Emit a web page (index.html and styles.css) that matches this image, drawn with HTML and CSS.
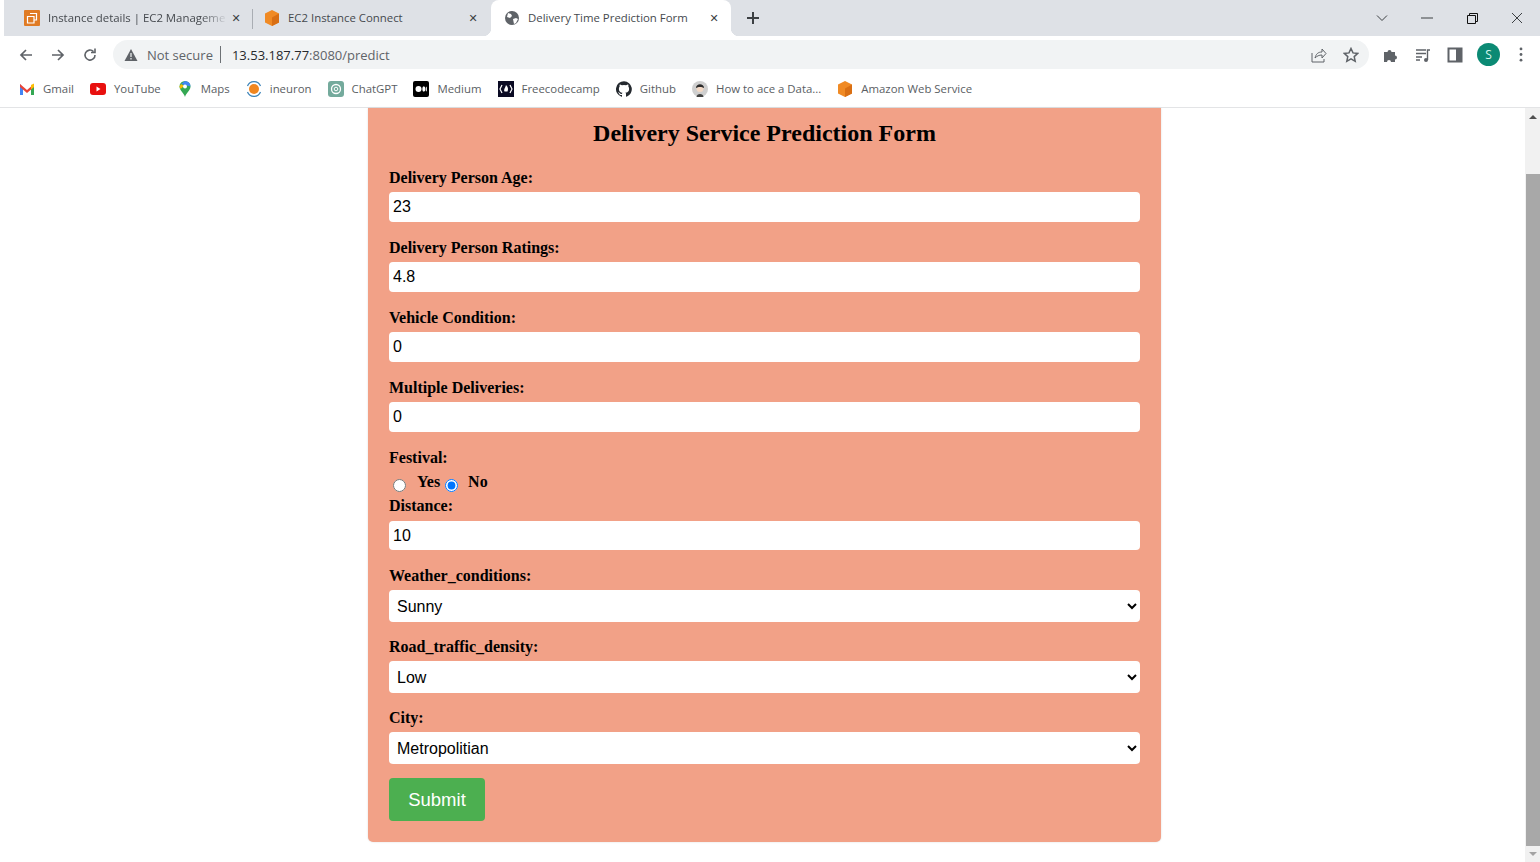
FILE: index.html
```html
<!DOCTYPE html>
<html lang="en">
<head>
  <meta charset="UTF-8">
  <title>Delivery Time Prediction Form</title>
  <link rel="stylesheet" href="styles.css">
</head>
<body>

<div class="tabstrip">
  <div class="tab tab-first">
    <svg class="favicon" viewBox="0 0 16 16"><rect width="16" height="16" rx="1" fill="#e07b24"/><path d="M6 3.500h6.500V10H10M3.500 6.500H10V13H3.500z" fill="none" stroke="#fff" stroke-width="1.200"/></svg>
    <span class="tab-title tab-title-fade">Instance details | EC2 Manageme</span>
    <span class="tab-close">&#10005;</span>
  </div>
  <div class="tab tab-second">
    <svg class="favicon" viewBox="0 0 16 16"><path d="M8 0l7 3.500v9L8 16l-7-3.500v-9z" fill="#f08a24"/><path d="M8 7.500L15 3.500v9L8 16z" fill="#d96f14"/></svg>
    <span class="tab-title">EC2 Instance Connect</span>
    <span class="tab-close">&#10005;</span>
  </div>
  <div class="tab tab-active">
    <svg class="favicon" viewBox="0 0 16 16"><circle cx="8" cy="8" r="7" fill="#5f6368"/><path d="M4 3l3 1 1 2-2 2-3-1zM9 9l3-1 2 1-2 4-2 1z" fill="#fff"/></svg>
    <span class="tab-title">Delivery Time Prediction Form</span>
    <span class="tab-close">&#10005;</span>
  </div>
  <svg class="new-tab" viewBox="0 0 14 14"><path d="M7 1v12M1 7h12" stroke="#3c4043" stroke-width="2"/></svg>
  <div class="window-controls">
    <svg viewBox="0 0 12 12"><path d="M1 3.500l5 5 5-5" fill="none" stroke="#3c4043"/></svg>
    <svg viewBox="0 0 12 12"><path d="M0 6h12" stroke="#3c4043"/></svg>
    <svg viewBox="0 0 12 12"><path d="M1.500 3.500h8v8h-8zM3.500 3.500v-2h8v8h-2" fill="none" stroke="#111"/></svg>
    <svg viewBox="0 0 12 12"><path d="M1 1l10 10M11 1L1 11" stroke="#3c4043"/></svg>
  </div>
</div>

<div class="toolbar">
  <svg class="nav-icon" viewBox="0 0 16 16"><path d="M14 8H3M8 3L3 8l5 5" fill="none" stroke="#5f6368" stroke-width="1.700"/></svg>
  <svg class="nav-icon" viewBox="0 0 16 16"><path d="M2 8h11M8 3l5 5-5 5" fill="none" stroke="#5f6368" stroke-width="1.700"/></svg>
  <svg class="nav-icon" viewBox="0 0 16 16"><path d="M13 8a5 5 0 1 1-1.500-3.500M13 1.500V5.500H9" fill="none" stroke="#5f6368" stroke-width="1.600"/></svg>
  <div class="omnibox">
    <svg class="warn" viewBox="0 0 14 14"><path d="M7 1l6.500 12H.5z" fill="#5f6368"/><path d="M7 5v4M7 10v1.500" stroke="#f1f3f4" stroke-width="1.200"/></svg>
    <span class="not-secure">Not secure</span>
    <span class="omni-sep"></span>
    <span class="url"><span class="url-host">13.53.187.77</span>:8080/predict</span>
    <svg class="omni-share" viewBox="0 0 16 16"><path d="M1 6v9h12v-3M4 11c1-4 3-6 7-6V2l4 4.500L11 11V8c-3 0-5 1-7 3z" fill="none" stroke="#5f6368"/></svg>
    <svg class="omni-star" viewBox="0 0 16 16"><path d="M8 1.500l2 4.400 4.800.5-3.600 3.200 1 4.700L8 11.900l-4.200 2.400 1-4.700L1.200 6.400 6 5.900z" fill="none" stroke="#5f6368" stroke-width="1.500"/></svg>
  </div>
  <div class="toolbar-right">
    <svg class="tool-icon" viewBox="0 0 16 16"><path d="M1 5h3.500a2 2 0 1 1 4 0H12v3.500a2 2 0 1 1 0 4V15H8a2 2 0 1 0-4 0H1z" fill="#5f6368"/></svg>
    <svg class="tool-icon" viewBox="0 0 16 16"><path d="M1 3h10M1 6.500h10M1 10h6M1 13h4" stroke="#5f6368" stroke-width="1.400"/><circle cx="11" cy="13" r="2" fill="#5f6368"/><path d="M12.500 13V3H15" fill="none" stroke="#5f6368" stroke-width="1.400"/></svg>
    <svg class="tool-icon" viewBox="0 0 16 16"><rect x="1.500" y="1.500" width="13" height="13" fill="none" stroke="#5f6368" stroke-width="2"/><rect x="9" y="2" width="5" height="12" fill="#5f6368"/></svg>
    <span class="avatar">S</span>
    <svg class="menu-dots" viewBox="0 0 4 16"><circle cx="2" cy="2" r="1.500" fill="#5f6368"/><circle cx="2" cy="8" r="1.500" fill="#5f6368"/><circle cx="2" cy="14" r="1.500" fill="#5f6368"/></svg>
  </div>
</div>

<div class="bookmarks">
  <div class="bookmark">
    <svg class="favicon" viewBox="0 0 16 16"><path d="M1 3v11h3V7z" fill="#4285f4"/><path d="M15 3v11h-3V7z" fill="#34a853"/><path d="M1 3l7 6 7-6v3l-7 6-7-6z" fill="#ea4335"/><path d="M12 4l3-1.500V6l-3 2.500z" fill="#fbbc04"/></svg>
    <span>Gmail</span>
  </div>
  <div class="bookmark">
    <svg class="favicon" viewBox="0 0 16 16"><rect y="2" width="16" height="12" rx="3" fill="#e8100f"/><path d="M6.500 5.500v5l4-2.500z" fill="#fff"/></svg>
    <span>YouTube</span>
  </div>
  <div class="bookmark">
    <svg class="favicon" viewBox="0 0 16 16"><path d="M8 0a5.500 5.500 0 0 1 5.500 5.500C13.500 9.500 9 12 8 16 7 12 2.500 9.500 2.500 5.500A5.500 5.500 0 0 1 8 0z" fill="#34a853"/><path d="M8 0a5.500 5.500 0 0 1 5.500 5.500L4 3z" fill="#4285f4"/><path d="M2.500 5.500L4 3l3 2-3.500 3z" fill="#fbbc04"/><circle cx="8" cy="5.500" r="2" fill="#fff"/></svg>
    <span>Maps</span>
  </div>
  <div class="bookmark">
    <svg class="favicon" viewBox="0 0 16 16"><circle cx="8" cy="8" r="5" fill="#f0861f"/><path d="M1.500 5a7 7 0 0 1 13 0M1.500 11a7 7 0 0 0 13 0" fill="none" stroke="#3b83b8" stroke-width="1.200"/></svg>
    <span>ineuron</span>
  </div>
  <div class="bookmark">
    <svg class="favicon" viewBox="0 0 16 16"><rect width="16" height="16" rx="3" fill="#74aa9c"/><circle cx="8" cy="8" r="4.500" fill="none" stroke="#fff" stroke-width="1.300"/><circle cx="8" cy="8" r="1.800" fill="none" stroke="#fff"/></svg>
    <span>ChatGPT</span>
  </div>
  <div class="bookmark">
    <svg class="favicon" viewBox="0 0 16 16"><rect width="16" height="16" rx="2" fill="#000"/><circle cx="5.500" cy="8" r="3" fill="#fff"/><ellipse cx="10.800" cy="8" rx="1.500" ry="2.800" fill="#fff"/><ellipse cx="13.300" cy="8" rx=".6" ry="2.500" fill="#fff"/></svg>
    <span>Medium</span>
  </div>
  <div class="bookmark">
    <svg class="favicon" viewBox="0 0 16 16"><rect width="16" height="16" fill="#0a0a23"/><path d="M4 4L2 8l2 4M12 4l2 4-2 4" fill="none" stroke="#fff" stroke-width="1.200"/><path d="M8 4c2 2 2.500 4 1.500 6.500h-3C5.500 8.500 7 7.500 8 4z" fill="#fff"/></svg>
    <span>Freecodecamp</span>
  </div>
  <div class="bookmark">
    <svg class="favicon" viewBox="0 0 16 16"><path d="M8 .2a8 8 0 0 0-2.500 15.600c.4.100.5-.2.5-.4v-1.400c-2.200.5-2.700-1-2.700-1-.4-.9-.9-1.200-.9-1.200-.7-.5.100-.5.100-.5.800.1 1.200.8 1.200.8.700 1.200 1.900.9 2.300.7.100-.5.300-.9.500-1.100-1.800-.2-3.600-.9-3.600-4 0-.9.300-1.600.8-2.100-.1-.2-.4-1 .1-2.100 0 0 .7-.2 2.200.8a7.600 7.600 0 0 1 4 0c1.500-1 2.200-.8 2.200-.8.400 1.100.2 1.900.1 2.100.5.600.8 1.300.8 2.100 0 3.100-1.900 3.700-3.700 3.900.3.300.6.800.6 1.500v2.200c0 .2.100.5.600.4A8 8 0 0 0 8 .2z" fill="#24292f"/></svg>
    <span>Github</span>
  </div>
  <div class="bookmark">
    <svg class="favicon" viewBox="0 0 16 16"><circle cx="8" cy="8" r="8" fill="#cfcfcf"/><circle cx="8" cy="7.500" r="3.500" fill="#f3d9c6"/><path d="M4 7c0-5 8-5 8 0-2-1.500-6-1.500-8 0z" fill="#2b2b2b"/><path d="M4.500 16c0-4 7-4 7 0z" fill="#444"/></svg>
    <span>How to ace a Data...</span>
  </div>
  <div class="bookmark">
    <svg class="favicon" viewBox="0 0 16 16"><path d="M8 0l7 3.500v9L8 16l-7-3.500v-9z" fill="#f08a24"/><path d="M8 7.500L15 3.500v9L8 16z" fill="#d96f14"/></svg>
    <span>Amazon Web Service</span>
  </div>
</div>

<div class="viewport">
  <div class="page">
    <form class="form-card">
      <h2>Delivery Service Prediction Form</h2>

      <label class="field-label" for="age">Delivery Person Age:</label>
      <input class="text-input" type="text" id="age" value="23">

      <label class="field-label" for="ratings">Delivery Person Ratings:</label>
      <input class="text-input" type="text" id="ratings" value="4.8">

      <label class="field-label" for="vehicle">Vehicle Condition:</label>
      <input class="text-input" type="text" id="vehicle" value="0">

      <label class="field-label" for="multiple">Multiple Deliveries:</label>
      <input class="text-input" type="text" id="multiple" value="0">

      <label class="field-label">Festival:</label>
      <div class="radio-row">
        <input type="radio" name="festival" id="yes">
        <label for="yes">Yes</label>
        <input type="radio" name="festival" id="no" checked>
        <label for="no">No</label>
      </div>

      <label class="field-label distance-label" for="distance">Distance:</label>
      <input class="text-input distance-input" type="text" id="distance" value="10">

      <label class="field-label" for="weather">Weather_conditions:</label>
      <select class="select-input" id="weather"><option>Sunny</option></select>

      <label class="field-label" for="traffic">Road_traffic_density:</label>
      <select class="select-input" id="traffic"><option>Low</option></select>

      <label class="field-label" for="city">City:</label>
      <select class="select-input" id="city"><option>Metropolitian</option></select>

      <button class="submit-btn" type="button">Submit</button>
    </form>
  </div>
  <div class="scrollbar">
    <span class="arrow-up"></span>
    <div class="thumb"></div>
    <span class="arrow-down"></span>
  </div>
</div>

</body>
</html>
```

FILE: styles.css
```css
* {
  box-sizing: border-box;
}

html, body {
  margin: 0;
  padding: 0;
  height: 862px;
  overflow: hidden;
  background-color: #fff;
}

body {
  display: flex;
  flex-direction: column;
  font-family: 'Open Sans', 'Liberation Sans', sans-serif;
}

svg {
  display: block;
  flex-shrink: 0;
}

/* tabs */
.tabstrip {
  height: 36px;
  margin-left: 4px;
  background-color: #dee1e6;
  display: flex;
  align-items: center;
}

.tab {
  height: 36px;
  display: flex;
  align-items: center;
  font-size: 11.400px;
  color: #45494e;
}

.tab-first {
  width: 248px;
  padding: 0 8px 0 20px;
}

.tab-second {
  width: 239px;
  padding: 0 10px 0 12px;
  position: relative;
}

.tab-second::before {
  content: "";
  position: absolute;
  left: 0;
  top: 9px;
  height: 20px;
  width: 1px;
  background-color: #a9adb3;
}

.tab-active {
  width: 240px;
  padding: 0 9px 0 13px;
  background-color: #fff;
  border-radius: 8px 8px 0 0;
  position: relative;
}

.tab-active::before,
.tab-active::after {
  content: "";
  position: absolute;
  bottom: 0;
  width: 8px;
  height: 8px;
}

.tab-active::before {
  left: -8px;
  background: radial-gradient(circle at 0 0, #dee1e6 8px, #fff 8.500px);
}

.tab-active::after {
  right: -8px;
  background: radial-gradient(circle at 100% 0, #dee1e6 8px, #fff 8.500px);
}

.favicon {
  width: 16px;
  height: 16px;
}

.tab-title {
  flex: 1;
  margin: -2px 0 0 8px;
  white-space: nowrap;
}

.tab-title-fade {
  -webkit-mask-image: linear-gradient(to right, #000 85%, transparent 100%);
  mask-image: linear-gradient(to right, #000 85%, transparent 100%);
}

.tab-close {
  width: 16px;
  font-size: 11px;
  font-weight: bold;
  text-align: center;
  color: #3c4043;
  font-family: 'DejaVu Sans', sans-serif;
}

.new-tab {
  width: 14px;
  height: 14px;
  margin-left: 15px;
}

.window-controls {
  margin-left: auto;
  display: flex;
  align-items: center;
  gap: 33px;
  padding-right: 17px;
}

.window-controls svg {
  width: 12px;
  height: 12px;
}

/* address bar */
.toolbar {
  height: 36px;
  display: flex;
  align-items: center;
  padding: 1px 0 0 18px;
}

.nav-icon {
  width: 16px;
  height: 16px;
  margin-right: 16px;
}

.omnibox {
  width: 1256px;
  height: 29px;
  margin-left: -1px;
  background-color: #f1f3f4;
  border-radius: 15px;
  display: flex;
  align-items: center;
  padding-left: 11px;
  font-size: 13px;
  color: #5f6368;
}

.warn {
  width: 14px;
  height: 14px;
}

.not-secure {
  margin-left: 9px;
}

.omni-sep {
  width: 1px;
  height: 17px;
  margin: 0 11px 0 7px;
  background-color: #6d7175;
}

.url-host {
  color: #27292c;
}

.omni-share {
  width: 16px;
  height: 16px;
  margin-left: auto;
}

.omni-star {
  width: 16px;
  height: 16px;
  margin-left: 16px;
  margin-right: 10px;
}

.toolbar-right {
  display: flex;
  align-items: center;
  margin-left: 14px;
}

.tool-icon {
  width: 16px;
  height: 16px;
  margin-right: 16px;
}

.avatar {
  width: 23px;
  height: 23px;
  margin-left: -2px;
  border-radius: 50%;
  background-color: #0b8a74;
  color: #d7f5ee;
  font-size: 12px;
  line-height: 23px;
  text-align: center;
}

.menu-dots {
  width: 4px;
  height: 15px;
  margin-left: 19px;
}

/* bookmarks */
.bookmarks {
  height: 36px;
  display: flex;
  align-items: center;
  gap: 16px;
  padding: 0 0 2px 19px;
  border-bottom: 1px solid #e3e4e6;
  font-size: 11.400px;
  color: #5a5e63;
}

.bookmark {
  display: flex;
  align-items: center;
  gap: 8px;
}

/* page */
.viewport {
  flex: 1;
  display: flex;
  min-height: 0;
}

.page {
  flex: 1;
  display: flex;
  justify-content: center;
  padding-left: 4px;
}

.form-card {
  width: 793px;
  height: 734px;
  padding: 12px 21px 0;
  background-color: #f2a187;
  border-radius: 0 0 5px 5px;
  box-shadow: 0 0 2px rgba(0, 0, 0, 0.15);
  font-family: 'Liberation Serif', 'Times New Roman', serif;
  color: #000;
}

.form-card h2 {
  margin: 0 0 22px;
  font-size: 24px;
  line-height: 27px;
  font-weight: bold;
  text-align: center;
}

.field-label {
  display: block;
  font-size: 16px;
  line-height: 18px;
  font-weight: bold;
  margin-bottom: 5px;
}

.text-input {
  display: block;
  width: 100%;
  height: 30px;
  margin-bottom: 17px;
  padding: 0 4px;
  border: none;
  border-radius: 4px;
  background-color: #fff;
  font-family: 'Liberation Sans', Arial, sans-serif;
  font-size: 16px;
  color: #000;
}

.select-input {
  display: block;
  width: 100%;
  height: 32px;
  margin-bottom: 16px;
  padding: 0 4px;
  border: none;
  border-radius: 4px;
  background-color: #fff;
  font-family: 'Liberation Sans', Arial, sans-serif;
  font-size: 16px;
  color: #000;
}

.radio-row {
  display: flex;
  align-items: flex-start;
  height: 20px;
  margin-top: 6px;
  font-size: 16px;
  font-weight: bold;
  line-height: 18px;
}

.radio-row input {
  width: 13px;
  height: 13px;
  margin: 6px 0 0 4px;
}

.radio-row label {
  margin-left: 11px;
  margin-right: 1px;
}

.radio-row label:last-child {
  margin-left: 10px;
}

.distance-label {
  margin-top: 4px;
  margin-bottom: 6px;
}

.distance-input {
  height: 29px;
}

.submit-btn {
  display: block;
  width: 96px;
  height: 43px;
  margin-top: -2px;
  border: none;
  border-radius: 4px;
  background-color: #4caf50;
  color: #fff;
  font-family: 'Liberation Sans', Arial, sans-serif;
  font-size: 18.500px;
}

/* scrollbar */
.scrollbar {
  width: 15px;
  background-color: #f1f1f1;
  display: flex;
  flex-direction: column;
  align-items: center;
}

.arrow-up {
  margin-top: 7px;
  border: 4px solid transparent;
  border-top: 0;
  border-bottom: 4px solid #505050;
}

.thumb {
  width: 14px;
  margin-left: 1px;
  height: 672px;
  margin-top: 55px;
  background-color: #a8a8a8;
}

.arrow-down {
  margin-top: 6px;
  border: 4px solid transparent;
  border-bottom: 0;
  border-top: 4px solid #a3a3a3;
}
```
